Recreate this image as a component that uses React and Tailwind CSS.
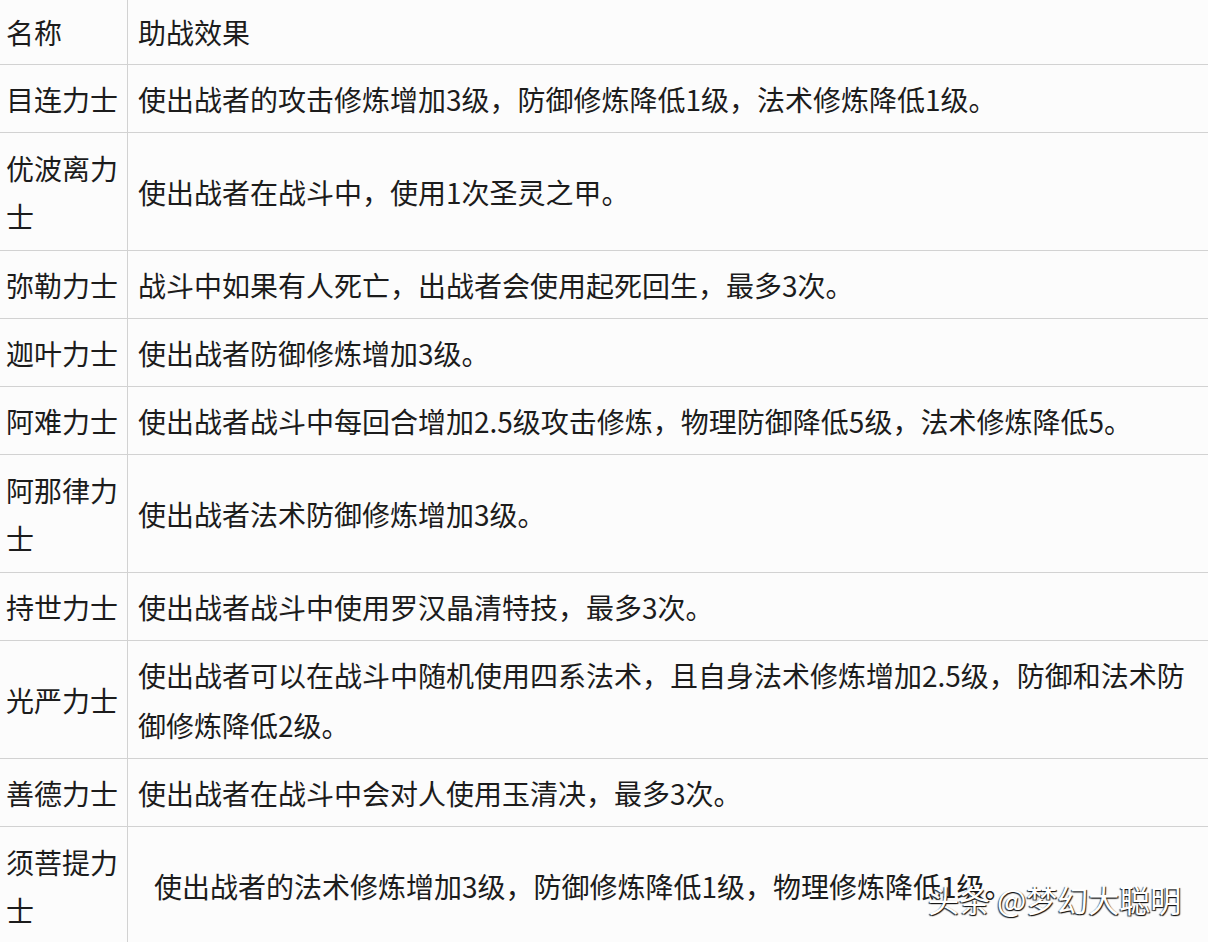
import React from "react";

const rows = [
  { name: "目连力士", effect: "使出战者的攻击修炼增加3级，防御修炼降低1级，法术修炼降低1级。", h: "h-[68px]" },
  { name: "优波离力士", effect: "使出战者在战斗中，使用1次圣灵之甲。", h: "h-[118px]" },
  { name: "弥勒力士", effect: "战斗中如果有人死亡，出战者会使用起死回生，最多3次。", h: "h-[68px]" },
  { name: "迦叶力士", effect: "使出战者防御修炼增加3级。", h: "h-[68px]" },
  { name: "阿难力士", effect: "使出战者战斗中每回合增加2.5级攻击修炼，物理防御降低5级，法术修炼降低5。", h: "h-[68px]" },
  { name: "阿那律力士", effect: "使出战者法术防御修炼增加3级。", h: "h-[118px]" },
  { name: "持世力士", effect: "使出战者战斗中使用罗汉晶清特技，最多3次。", h: "h-[68px]" },
  { name: "光严力士", effect: "使出战者可以在战斗中随机使用四系法术，且自身法术修炼增加2.5级，防御和法术防御修炼降低2级。", h: "h-[118px]" },
  { name: "善德力士", effect: "使出战者在战斗中会对人使用玉清决，最多3次。", h: "h-[68px]" },
  { name: "须菩提力士", effect: "使出战者的法术修炼增加3级，防御修炼降低1级，物理修炼降低1级。", h: "h-[118px]", indent: true },
];

export default function App() {
  return (
    <div
      className="relative w-[1208px] h-[942px] overflow-hidden bg-[#fcfcfc] text-[#1c1c1c] text-[28px]"
      style={{ fontFamily: '"Noto Sans CJK SC", "Noto Sans", sans-serif' }}
    >
      <div className="flex flex-col">
        <div className="flex h-[65px] border-b border-[#d2d2d2]">
          <div className="w-[128px] shrink-0 flex items-center pl-[6px] border-r border-[#d2d2d2]">名称</div>
          <div className="flex-1 flex items-center pl-[10px]">助战效果</div>
        </div>
        {rows.map((r) => (
          <div key={r.name} className={`flex ${r.h} shrink-0 border-b border-[#d2d2d2]`}>
            <div className="w-[128px] shrink-0 flex items-center pl-[6px] pr-[4px] border-r border-[#d2d2d2] leading-[48px] break-all">
              {r.name}
            </div>
            <div
              className={`flex-1 flex items-center leading-[50px] pr-[18px] ${r.indent ? "pl-[26px]" : "pl-[10px]"}`}
            >
              {r.effect}
            </div>
          </div>
        ))}
      </div>
      <div className="absolute left-[928px] top-[879px] text-[31px] leading-[40px] text-white [text-shadow:1px_1px_1px_#111,-1px_1px_1px_#444] whitespace-nowrap">
        头条 @梦幻大聪明
      </div>
    </div>
  );
}
